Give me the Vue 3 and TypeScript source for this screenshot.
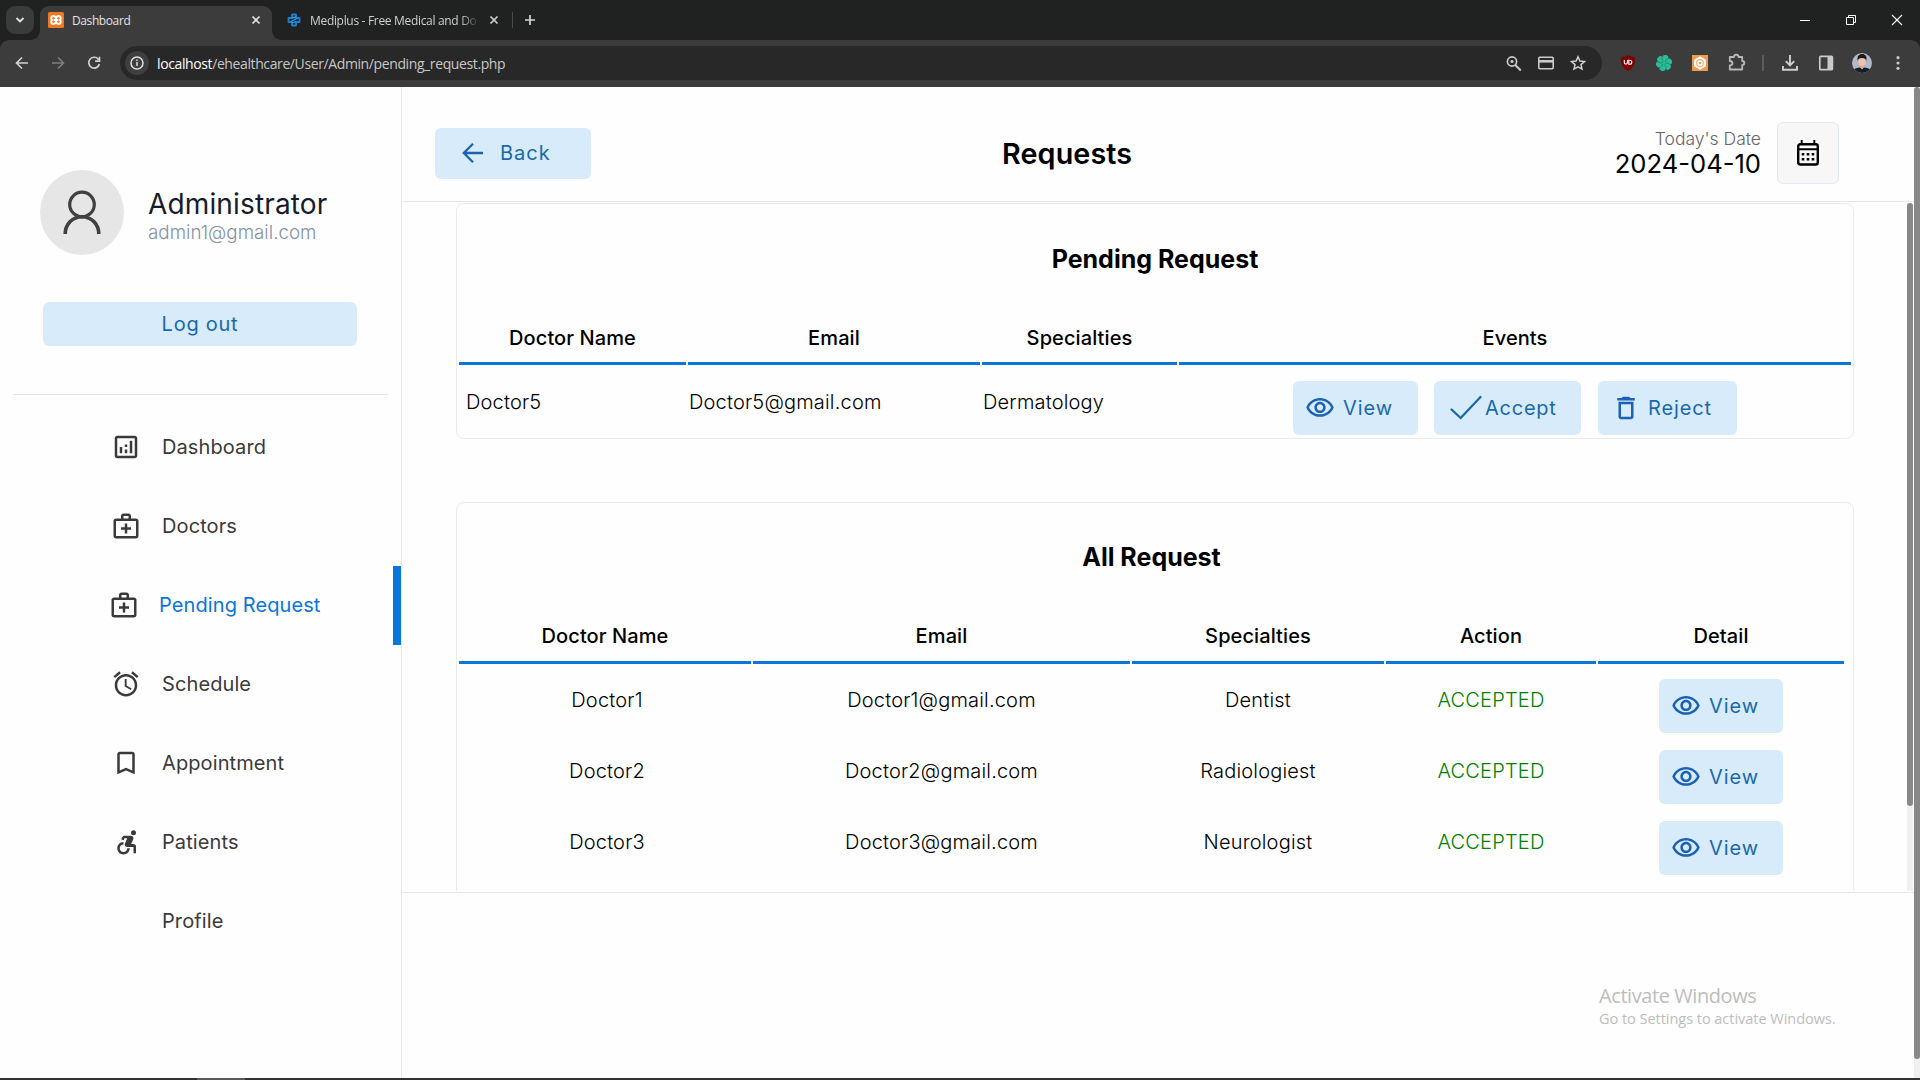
<script setup lang="ts">
interface MenuItem {
  label: string
  icon: string
  active?: boolean
}

interface RequestRow {
  name: string
  email: string
  specialty: string
  status: string
}

const iconPaths: Record<string, string> = {
  dashboard:
    'M19 3H5c-1.1 0-2 .9-2 2v14c0 1.1.9 2 2 2h14c1.1 0 2-.9 2-2V5c0-1.1-.9-2-2-2zm0 16H5V5h14v14zM7 12h2v5H7zM15 7h2v10h-2zM11 14h2v3h-2zM11 10h2v2h-2z',
  doctor:
    'M20 6h-4V4c0-1.1-.9-2-2-2h-4c-1.1 0-2 .9-2 2v2H4c-1.1 0-2 .9-2 2v12c0 1.1.9 2 2 2h16c1.1 0 2-.9 2-2V8c0-1.1-.9-2-2-2zM10 4h4v2h-4V4zm10 16H4V8h16v12zM13 10h-2v3H8v2h3v3h2v-3h3v-2h-3z',
  alarm:
    'M22 5.72l-4.6-3.86-1.29 1.53 4.6 3.86L22 5.72zM7.88 3.39L6.6 1.86 2 5.71l1.29 1.53 4.59-3.85zM12.5 8H11v6l4.75 2.85.75-1.23-4-2.37V8zM12 4c-4.97 0-9 4.03-9 9s4.02 9 9 9c4.97 0 9-4.03 9-9s-4.03-9-9-9zm0 16c-3.87 0-7-3.13-7-7s3.13-7 7-7 7 3.13 7 7-3.13 7-7 7z',
  bookmark:
    'M17 3H7c-1.1 0-1.99.9-1.99 2L5 21l7-3 7 3V5c0-1.1-.9-2-2-2zm0 15l-5-2.18L7 18V5h10v13z',
  patient:
    'M20 4.54a2 2 0 1 1-4 0a2 2 0 1 1 4 0zM15 17h-2c0 1.65-1.35 3-3 3s-3-1.35-3-3 1.35-3 3-3v-2c-2.76 0-5 2.24-5 5s2.24 5 5 5 5-2.24 5-5zm3-3.5h-1.86l1.67-3.67C18.42 8.5 17.44 7 15.96 7h-5.2c-.81 0-1.54.47-1.87 1.2L8.22 10l1.92.53.65-1.53H13l-1.83 4.1c-.6 1.33.39 2.9 1.85 2.9H18v5h2v-5.5c0-1.1-.9-2-2-2z',
  eye:
    'M12 6c3.79 0 7.17 2.13 8.82 5.5C19.17 14.87 15.79 17 12 17s-7.17-2.13-8.82-5.5C4.83 8.13 8.21 6 12 6m0-2C7 4 2.73 7.11 1 11.5 2.73 15.89 7 19 12 19s9.27-3.11 11-7.5C21.27 7.11 17 4 12 4zm0 5c1.38 0 2.5 1.12 2.5 2.5S13.38 14 12 14s-2.5-1.12-2.5-2.5S10.62 9 12 9m0-2c-2.48 0-4.5 2.02-4.5 4.5S9.52 16 12 16s4.5-2.02 4.5-4.5S14.48 7 12 7z',
  trash:
    'M16 9v10H8V9h8m-1.5-6h-5l-1 1H5v2h14V4h-3.5l-1-1zM18 7H6v12c0 1.1.9 2 2 2h8c1.1 0 2-.9 2-2V7z',
}

const menu: MenuItem[] = [
  { label: 'Dashboard', icon: 'dashboard' },
  { label: 'Doctors', icon: 'doctor' },
  { label: 'Pending Request', icon: 'doctor', active: true },
  { label: 'Schedule', icon: 'alarm' },
  { label: 'Appointment', icon: 'bookmark' },
  { label: 'Patients', icon: 'patient' },
  { label: 'Profile', icon: '' },
]

const pendingHeads: string[] = ['Doctor Name', 'Email', 'Specialties', 'Events']
const allHeads: string[] = ['Doctor Name', 'Email', 'Specialties', 'Action', 'Detail']
const rows: RequestRow[] = [
  { name: 'Doctor1', email: 'Doctor1@gmail.com', specialty: 'Dentist', status: 'ACCEPTED' },
  { name: 'Doctor2', email: 'Doctor2@gmail.com', specialty: 'Radiologiest', status: 'ACCEPTED' },
  { name: 'Doctor3', email: 'Doctor3@gmail.com', specialty: 'Neurologist', status: 'ACCEPTED' },
]
</script>

<template>
  <div class="screen">
    <header class="tabstrip">
      <div class="tab-search">
        <svg width="10" height="8" viewBox="0 0 10 8"><path d="M1.5 2l3.5 3.5L8.5 2" fill="none" stroke="#e3e3e3" stroke-width="1.8" /></svg>
      </div>
      <div class="tab tab-active">
        <svg class="favicon" width="16" height="16" viewBox="0 0 16 16">
          <rect width="16" height="16" rx="1.5" fill="#f37623" />
          <path d="M4 8C2.6 6.600 3 4 5.300 4S8 6 8 8s-.4 4-2.700 4S2.600 9.400 4 8zM12 8c1.400-1.400 1-4-1.300-4S8 6 8 8s.4 4 2.700 4S13.400 9.400 12 8z" fill="none" stroke="#fff" stroke-width="1.900" />
          <path d="M5.500 8h5" stroke="#fff" stroke-width="1.800" />
        </svg>
        <span class="tab-title">Dashboard</span>
        <svg class="tab-close" width="10" height="10" viewBox="0 0 10 10"><path d="M1.5 1.5l7 7M8.5 1.5l-7 7" stroke="#e3e3e3" stroke-width="1.7" /></svg>
      </div>
      <div class="tab tab-idle">
        <svg class="favicon" width="16" height="16" viewBox="0 0 16 16">
          <path d="M6 2.5h4V6h3.5v4H10v3.500H6V10H2.500V6H6z" fill="none" stroke="#1b7fd0" stroke-width="1.8" stroke-linejoin="round" />
          <path d="M5 9.5l6-3M6 11l4-1.5M6 6l4-1" stroke="#26a3e8" stroke-width="1.3" />
        </svg>
        <span class="tab-title fade">Mediplus - Free Medical and Do</span>
        <svg class="tab-close" width="10" height="10" viewBox="0 0 10 10"><path d="M1.5 1.5l7 7M8.5 1.5l-7 7" stroke="#cfcfcf" stroke-width="1.7" /></svg>
      </div>
      <i class="tab-sep"></i>
      <svg class="tab-plus" width="12" height="12" viewBox="0 0 12 12"><path d="M6 1v10M1 6h10" stroke="#d5d5d5" stroke-width="1.7" /></svg>
      <div class="window-controls">
        <svg width="46" height="40" viewBox="0 0 46 40"><path d="M18 20.5h10" stroke="#fff" /></svg>
        <svg width="46" height="40" viewBox="0 0 46 40"><path d="M18.5 17.5h7v7h-7zM20.5 17.5v-2h7v7h-2" fill="none" stroke="#fff" /></svg>
        <svg width="46" height="40" viewBox="0 0 46 40"><path d="M18 15l10 10M28 15l-10 10" stroke="#fff" stroke-width="1.1" /></svg>
      </div>
    </header>

    <div class="toolbar-back">
      <nav class="toolbar">
        <svg class="slot" viewBox="0 0 36 36"><path d="M24 18H13M18 12.5L12.500 18l5.500 5.500" fill="none" stroke="#d0d0d0" stroke-width="1.7" /></svg>
        <svg class="slot" viewBox="0 0 36 36"><path d="M12 18h11M18 12.5l5.500 5.500-5.500 5.500" fill="none" stroke="#7d7d7d" stroke-width="1.7" /></svg>
        <svg class="slot" viewBox="0 0 36 36"><path d="M22.7 14.7A5.400 5.400 0 1 0 23.400 19M23.500 11.800v4.400h-4.400" fill="none" stroke="#d0d0d0" stroke-width="1.7" /></svg>
        <div class="address">
          <svg class="info" width="24" height="24" viewBox="0 0 24 24">
            <circle cx="12" cy="12" r="12" fill="#3f3f3f" />
            <circle cx="12" cy="12" r="6" fill="none" stroke="#e0e0e0" stroke-width="1.5" />
            <path d="M12 11v4M12 8.5v1.500" stroke="#e0e0e0" stroke-width="1.5" />
          </svg>
          <span class="url"><b>localhost</b>/ehealthcare/User/Admin/pending_request.php</span>
          <svg class="address-icon" viewBox="0 0 32 34"><circle cx="14" cy="15.5" r="4.600" fill="none" stroke="#c9c9c9" stroke-width="1.7" /><path d="M17.300 19l5.500 5.500" stroke="#c9c9c9" stroke-width="2" /><circle cx="14" cy="15.500" r="1.600" fill="#c9c9c9" /></svg>
          <svg class="address-icon" viewBox="0 0 32 34"><rect x="8.800" y="11.300" width="14.400" height="11.400" rx="1" fill="none" stroke="#c9c9c9" stroke-width="1.6" /><path d="M9 15.300h14" stroke="#c9c9c9" stroke-width="2.6" /></svg>
          <svg class="address-icon" viewBox="0 0 32 34"><path d="M16 10.800l1.900 4.200 4.600.5-3.500 3.100 1 4.500-4-2.300-4 2.300 1-4.500-3.500-3.100 4.600-.5z" fill="none" stroke="#d0d0d0" stroke-width="1.5" /></svg>
        </div>
        <svg class="slot" viewBox="0 0 36 36"><path d="M18 10c2 1.500 4.500 2 7 2 .3 6-1 11-7 14-6-3-7.300-8-7-14 2.500 0 5-.5 7-2z" fill="#800000" stroke="#5b2020" stroke-width=".6" /><path d="M14.300 15v2.500a1.600 1.600 0 0 0 3.200 0V15M18.800 15.300v4h1a2 2 0 0 0 0-4z" fill="none" stroke="#fff" stroke-width="1.1" /></svg>
        <svg class="slot" viewBox="0 0 36 36">
          <circle cx="18" cy="18" r="6.5" fill="#2dbd96" />
          <circle v-for="a in 6" :key="a" cx="18" cy="13" r="3.2" fill="#2dbd96" :transform="`rotate(${a * 60 + 15} 18 18)`" />
          <path v-for="a in 6" :key="'s' + a" d="M18 16.500c-2-1-2.600-3-1.500-5.500" fill="none" stroke="#16755b" stroke-width=".6" :transform="`rotate(${a * 60} 18 18)`" />
        </svg>
        <svg class="slot" viewBox="0 0 36 36"><rect x="10" y="10" width="16" height="16" fill="#ef9a4d" /><path d="M18 11.800l5.400 3.100v6.200L18 24.200l-5.400-3.100v-6.200z" fill="#fff" stroke="#fff" stroke-linejoin="round" /><circle cx="18" cy="18" r="3.400" fill="none" stroke="#efab6b" stroke-width="1.1" /><circle cx="18" cy="18" r="1.3" fill="#ef9a4d" /></svg>
        <svg class="slot" viewBox="0 0 36 36"><path d="M11.800 12h4.200c0-3 4.500-3 4.500 0h3.700v4c2.800 0 2.800 4 0 4v4.500H11.800v-4c3.600-.3 3.600-4.200 0-4.500z" fill="none" stroke="#b8b8b8" stroke-width="1.8" stroke-linejoin="round" /></svg>
        <i class="tool-sep"></i>
        <svg class="slot" viewBox="0 0 36 36"><path d="M18 10v10M13.800 16.200L18 20.400l4.200-4.200M11 21v3.800h14V21" fill="none" stroke="#cfcfcf" stroke-width="1.9" /></svg>
        <svg class="slot" viewBox="0 0 36 36"><rect x="11.800" y="11.300" width="12.600" height="13.400" rx="1" fill="none" stroke="#c9c9c9" stroke-width="1.7" /><path d="M19.500 11h5v14h-5z" fill="#c9c9c9" /></svg>
        <svg class="slot" viewBox="0 0 36 36">
          <clipPath id="profile-clip"><circle cx="18" cy="18" r="10" /></clipPath>
          <g clip-path="url(#profile-clip)">
            <rect x="8" y="8" width="20" height="20" fill="#b4b9c9" />
            <path d="M8 28c.5-4 4-5.500 10-5.500s9.500 1.500 10 5.500z" fill="#151c2b" />
            <path d="M15.500 18h5v4L18 24.500 15.500 22z" fill="#d9a58c" />
            <ellipse cx="18" cy="16.500" rx="3.700" ry="4.800" fill="#efc4ac" />
            <path d="M13.800 16c-1.200-5 1.300-7 4.300-7s5.300 2 4.100 7c-.6-2.300-1.300-3-4.200-3s-3.600.7-4.200 3z" fill="#1d1a1c" />
          </g>
        </svg>
        <svg class="slot" viewBox="0 0 36 36"><circle cx="18" cy="12.700" r="1.6" fill="#c9c9c9" /><circle cx="18" cy="18" r="1.6" fill="#c9c9c9" /><circle cx="18" cy="23.300" r="1.6" fill="#c9c9c9" /></svg>
      </nav>
    </div>

    <div class="page">
      <aside class="sidebar">
        <div class="profile">
          <svg class="avatar" width="84" height="85" viewBox="0 0 84 85">
            <ellipse cx="42" cy="42.5" rx="42" ry="42.5" fill="#e6e6e6" />
            <circle cx="42" cy="34.5" r="12.300" fill="none" stroke="#404040" stroke-width="3.2" />
            <path d="M25.200 64c0-9.500 7-17.300 16.800-17.300S58.800 54.500 58.800 64" fill="none" stroke="#404040" stroke-width="3.6" />
          </svg>
          <div class="who">
            <div class="who-name">Administrator</div>
            <div class="who-mail">admin1@gmail.com</div>
          </div>
        </div>
        <button class="btn logout">Log out</button>
        <div class="divider"></div>
        <ul class="menu">
          <li v-for="item in menu" :key="item.label" :class="{ active: item.active }">
            <svg class="menu-icon" width="30" height="30" viewBox="0 0 24 24"><path v-if="item.icon" :d="iconPaths[item.icon]" fill="#3a3a3a" /></svg>
            <span>{{ item.label }}</span>
          </li>
        </ul>
      </aside>

      <main class="main">
        <section class="topbar">
          <button class="btn back">
            <svg width="22" height="22" viewBox="0 0 22 22"><path d="M21 11H2.500M11 1.800L1.800 11l9.200 9.200" fill="none" stroke="#1b62b3" stroke-width="2.3" /></svg>
            <span>Back</span>
          </button>
          <h1>Requests</h1>
          <div class="date">
            <div class="date-label">Today's Date</div>
            <div class="date-value">2024-04-10</div>
          </div>
          <div class="date-icon">
            <svg width="24" height="28" viewBox="0 0 24 28">
              <rect x="2.200" y="5.200" width="19.600" height="20.300" rx="2" fill="none" stroke="#000" stroke-width="2.4" />
              <path d="M1.500 10.300h21M5.700 1v4M18.300 1v4" stroke="#000" stroke-width="2" />
              <path d="M5.700 14h2.600v2.500H5.700zM10.700 14h2.600v2.500h-2.600zM15.700 14h2.600v2.500h-2.600zM5.700 19h2.600v2.500H5.700zM10.700 19h2.600v2.500h-2.600zM15.700 19h2.600v2.500h-2.600z" />
            </svg>
          </div>
        </section>

        <div class="content">
          <div class="cards">
            <section class="card pending">
              <h2>Pending Request</h2>
              <div class="grid head">
                <div v-for="h in pendingHeads" :key="h" class="th">{{ h }}</div>
              </div>
              <div class="grid row">
                <div class="td first">Doctor5</div>
                <div class="td">Doctor5@gmail.com</div>
                <div class="td">Dermatology</div>
                <div class="events">
                  <button class="btn view">
                    <svg width="30" height="30" viewBox="0 0 24 24"><path :d="iconPaths.eye" fill="#1b62b3" /></svg><span>View</span>
                  </button>
                  <button class="btn accept">
                    <svg width="34" height="30" viewBox="0 0 34 30"><path d="M2.500 16.500l9.200 8.500L31.500 4" fill="none" stroke="#1969aa" stroke-width="2.3" stroke-linecap="round" /></svg><span>Accept</span>
                  </button>
                  <button class="btn reject">
                    <svg width="30" height="30" viewBox="0 0 24 24"><path :d="iconPaths.trash" fill="#1b62b3" /></svg><span>Reject</span>
                  </button>
                </div>
              </div>
            </section>

            <section class="card all">
              <h2>All Request</h2>
              <div class="grid head">
                <div v-for="h in allHeads" :key="h" class="th">{{ h }}</div>
              </div>
              <div v-for="r in rows" :key="r.name" class="grid row">
                <div class="td name">{{ r.name }}</div>
                <div class="td">{{ r.email }}</div>
                <div class="td">{{ r.specialty }}</div>
                <div class="td accepted">{{ r.status }}</div>
                <div class="detail">
                  <button class="btn view">
                    <svg width="30" height="30" viewBox="0 0 24 24"><path :d="iconPaths.eye" fill="#1b62b3" /></svg><span>View</span>
                  </button>
                </div>
              </div>
            </section>
          </div>
          <div class="inner-scroll"><i></i></div>
        </div>
      </main>

      <div class="page-scroll"><i></i></div>

      <div class="watermark">
        <div class="wm-title">Activate Windows</div>
        <div class="wm-text">Go to Settings to activate Windows.</div>
      </div>
    </div>
    <footer class="taskbar"><i></i></footer>
  </div>
</template>

<style>
html,
body {
  margin: 0;
  overflow: hidden;
}
</style>

<style scoped>
.screen {
  width: 1920px;
  height: 1080px;
  display: flex;
  flex-direction: column;
  background: #fefefe;
  font-family: Inter, 'Liberation Sans', sans-serif;
  overflow: hidden;
}
.screen * {
  box-sizing: border-box;
}
svg {
  display: block;
  flex: none;
}
i {
  display: block;
}

/* Browser tab strip */
.tabstrip {
  height: 40px;
  flex: none;
  display: flex;
  align-items: center;
  padding-left: 6px;
  background: #202221;
  font-family: 'Open Sans', 'Noto Sans', sans-serif;
}
.tab-search {
  width: 28px;
  height: 28px;
  border-radius: 9px;
  background: #3a3b3b;
  display: flex;
  align-items: center;
  justify-content: center;
}
.tab {
  display: flex;
  align-items: center;
  font-size: 12px;
  color: #e3e3e3;
}
.tab-active {
  position: relative;
  width: 232px;
  height: 34px;
  margin: 6px 0 0 6px;
  padding: 0 11px 6px 8px;
  background: #3c3c3c;
  border-radius: 9px 9px 0 0;
}
.tab-active::before,
.tab-active::after {
  content: '';
  position: absolute;
  bottom: 0;
  width: 9px;
  height: 9px;
}
.tab-active::before {
  left: -9px;
  background: radial-gradient(circle at 0 0, transparent 8.5px, #3c3c3c 9px);
}
.tab-active::after {
  right: -9px;
  background: radial-gradient(circle at 100% 0, transparent 8.5px, #3c3c3c 9px);
}
.tab-title {
  margin-left: 8px;
  white-space: nowrap;
  letter-spacing: -0.4px;
}
.tab-close {
  margin-left: auto;
}
.tab-idle {
  width: 213px;
  margin-left: 14px;
  color: #cfcfcf;
}
.fade {
  width: 170px;
  letter-spacing: -0.32px;
  mask-image: linear-gradient(90deg, #000 88%, transparent 100%);
}
.tab-sep {
  width: 1px;
  height: 16px;
  margin-left: 13px;
  background: #4a4b4b;
}
.tab-plus {
  margin-left: 11px;
}
.window-controls {
  margin-left: auto;
  display: flex;
}

/* Browser toolbar */
.toolbar-back {
  flex: none;
  background: #202221;
}
.toolbar {
  height: 47px;
  display: flex;
  align-items: center;
  padding: 0 4px 1px;
  background: #3c3c3c;
  border-radius: 9px 9px 0 0;
}
.slot {
  width: 36px;
  height: 36px;
}
.address {
  width: 1482px;
  height: 34px;
  margin: 0 8px;
  padding: 0 8px 0 5px;
  display: flex;
  align-items: center;
  border-radius: 17px;
  background: #282828;
}
.url {
  margin: 0 auto 0 8px;
  font: 14px 'Open Sans', 'Noto Sans', sans-serif;
  letter-spacing: -0.39px;
  color: #c7c7c7;
}
.url b {
  font-weight: 400;
  color: #fff;
}
.address-icon {
  width: 32px;
  height: 34px;
}
.tool-sep {
  width: 2px;
  height: 16px;
  margin: 0 8px;
  background: #5a5a5a;
}

/* Page frame */
.page {
  position: relative;
  flex: 1;
  display: flex;
  min-height: 0;
}
.sidebar {
  width: 402px;
  flex: none;
  border-right: 1px solid #e8e8e8;
  display: flex;
  flex-direction: column;
}
.profile {
  display: flex;
  padding: 83px 0 0 40px;
}
.who {
  padding: 15px 0 0 24px;
}
.who-name {
  font-size: 28px;
  letter-spacing: 0.15px;
  line-height: 38px;
  color: #161c2d;
}
.who-mail {
  font-size: 18.75px;
  font-weight: 350;
  line-height: 20px;
  letter-spacing: 0.02px;
  color: #8492a6;
}
.btn {
  border: 0;
  padding: 0;
  border-radius: 6px;
  background: #d8ebfa;
  color: #1969aa;
  font-family: inherit;
  font-size: 20px;
  letter-spacing: 1px;
  display: flex;
  align-items: center;
}
.logout {
  width: 314px;
  height: 44px;
  margin: 47px 0 0 43px;
  justify-content: center;
  letter-spacing: 0.75px;
}
.divider {
  width: 375px;
  height: 1px;
  margin: 48px 0 0 13px;
  background: #e6e6e6;
}
.menu {
  list-style: none;
  margin: 13px 0 0;
  padding: 0;
}
.menu li {
  height: 79px;
  display: flex;
  align-items: center;
  padding: 0 0 2px 111px;
  font-size: 20px;
  letter-spacing: 0.1px;
  color: #3a3a3a;
}
.menu li span {
  margin-left: 21px;
}
.menu li.active {
  padding-left: 109px;
  border-right: 8px solid #0a76d8;
  color: #0a76d8;
}
.menu li.active span {
  margin-left: 20px;
}

/* Header row */
.main {
  width: 1512px;
  flex: none;
}
.topbar {
  height: 115px;
  display: flex;
  align-items: flex-start;
  padding-left: 33px;
  border-bottom: 1px solid #e8e8e8;
}
.back {
  width: 156px;
  height: 51px;
  margin-top: 41px;
  padding: 0 0 2px 27px;
}
.back span {
  margin-left: 16px;
}
h1 {
  margin: 49px 0 0 411px;
  width: 140px;
  font-size: 28.75px;
  line-height: 36px;
  font-weight: 600;
  letter-spacing: 0.1px;
}
.date {
  margin: 41px 16px 0 auto;
  text-align: right;
}
.date-label {
  font-size: 17.5px;
  font-weight: 300;
  line-height: 21px;
  color: #666;
}
.date-value {
  font-size: 25.6px;
  line-height: 30px;
  color: #000;
}
.date-icon {
  width: 62px;
  height: 62px;
  margin: 35px 75px 0 0;
  display: flex;
  align-items: center;
  justify-content: center;
  border: 1px solid #e3e8f6;
  border-radius: 6px;
  background: #f7f7f7;
}

/* Request cards */
.content {
  height: 691px;
  display: flex;
  padding-top: 1px;
  border-bottom: 1px solid #e8e8e8;
  overflow: hidden;
}
.cards {
  width: 1505px;
  padding-left: 54px;
  height: 688px;
  overflow: hidden;
}
.card {
  width: 1398px;
  border: 1px solid #ebebeb;
  border-radius: 8px;
  padding-left: 2px;
}
h2 {
  margin: 0;
  font-size: 25px;
  line-height: 30px;
  font-weight: 700;
  text-align: center;
}
.grid {
  display: grid;
  column-gap: 2px;
  font-size: 20px;
}
.pending {
  height: 236px;
  padding-top: 40px;
}
.pending h2 {
  width: 1392px;
}
.pending .grid {
  grid-template-columns: 227px 292px 195px 672px;
}
.all {
  height: 420px;
  margin-top: 63px;
  padding-top: 39px;
}
.all h2 {
  width: 1385px;
}
.all .grid {
  grid-template-columns: 292px 377px 252px 210px 246px;
  text-align: center;
}
.th {
  text-align: center;
  font-weight: 450;
  letter-spacing: 0.1px;
  line-height: 30px;
  border-bottom: 3px solid #0a76d8;
}
.pending .th {
  height: 91px;
  padding-top: 49px;
}
.all .th {
  height: 92px;
  padding-top: 49px;
}
.td {
  line-height: 30px;
  font-weight: 300;
  letter-spacing: 0.18px;
  color: #000;
}
.pending .td {
  padding: 22px 0 0 1px;
}
.pending .td.first {
  padding-left: 7px;
}
.all .td {
  padding-top: 21px;
}
.all .td.name {
  padding-left: 4px;
}
.all .td.accepted {
  color: #008000;
}
.all .row {
  height: 71px;
}
.events {
  display: flex;
  padding: 16px 0 0 114px;
}
.detail {
  padding: 15px 0 0 61px;
}
.view {
  width: 125px;
  height: 54px;
  padding-left: 12px;
  letter-spacing: 0.9px;
}
.detail .view {
  width: 124px;
}
.view span {
  margin-left: 8px;
}
.accept {
  width: 147px;
  height: 54px;
  margin-left: 16px;
  padding-left: 15px;
  letter-spacing: 0.75px;
}
.accept span {
  margin-left: 2px;
}
.reject {
  width: 139px;
  height: 54px;
  margin-left: 17px;
  padding-left: 13px;
  letter-spacing: 0.85px;
}
.reject span {
  margin-left: 7px;
}

/* Scrollbars */
.inner-scroll {
  width: 6px;
  height: 688px;
  background: #f0f0f0;
}
.inner-scroll i {
  height: 603px;
  border-radius: 3px;
  background: #888;
}
.page-scroll {
  width: 6px;
  background: #f0f0f0;
}
.page-scroll i {
  height: 972px;
  border-radius: 3px;
  background: #888;
}
.watermark {
  position: absolute;
  left: 1599px;
  top: 896px;
  font-family: 'Open Sans', 'Noto Sans', sans-serif;
  color: #bdbdbd;
  white-space: nowrap;
}
.wm-title {
  font-size: 20px;
  line-height: 26px;
  letter-spacing: -0.42px;
}
.wm-text {
  font-size: 14.5px;
  line-height: 20px;
  letter-spacing: -0.03px;
}
.taskbar {
  height: 2px;
  flex: none;
  padding-left: 197px;
  background: #333;
}
.taskbar i {
  width: 48px;
  height: 2px;
  background: #5a5a5a;
}
</style>
